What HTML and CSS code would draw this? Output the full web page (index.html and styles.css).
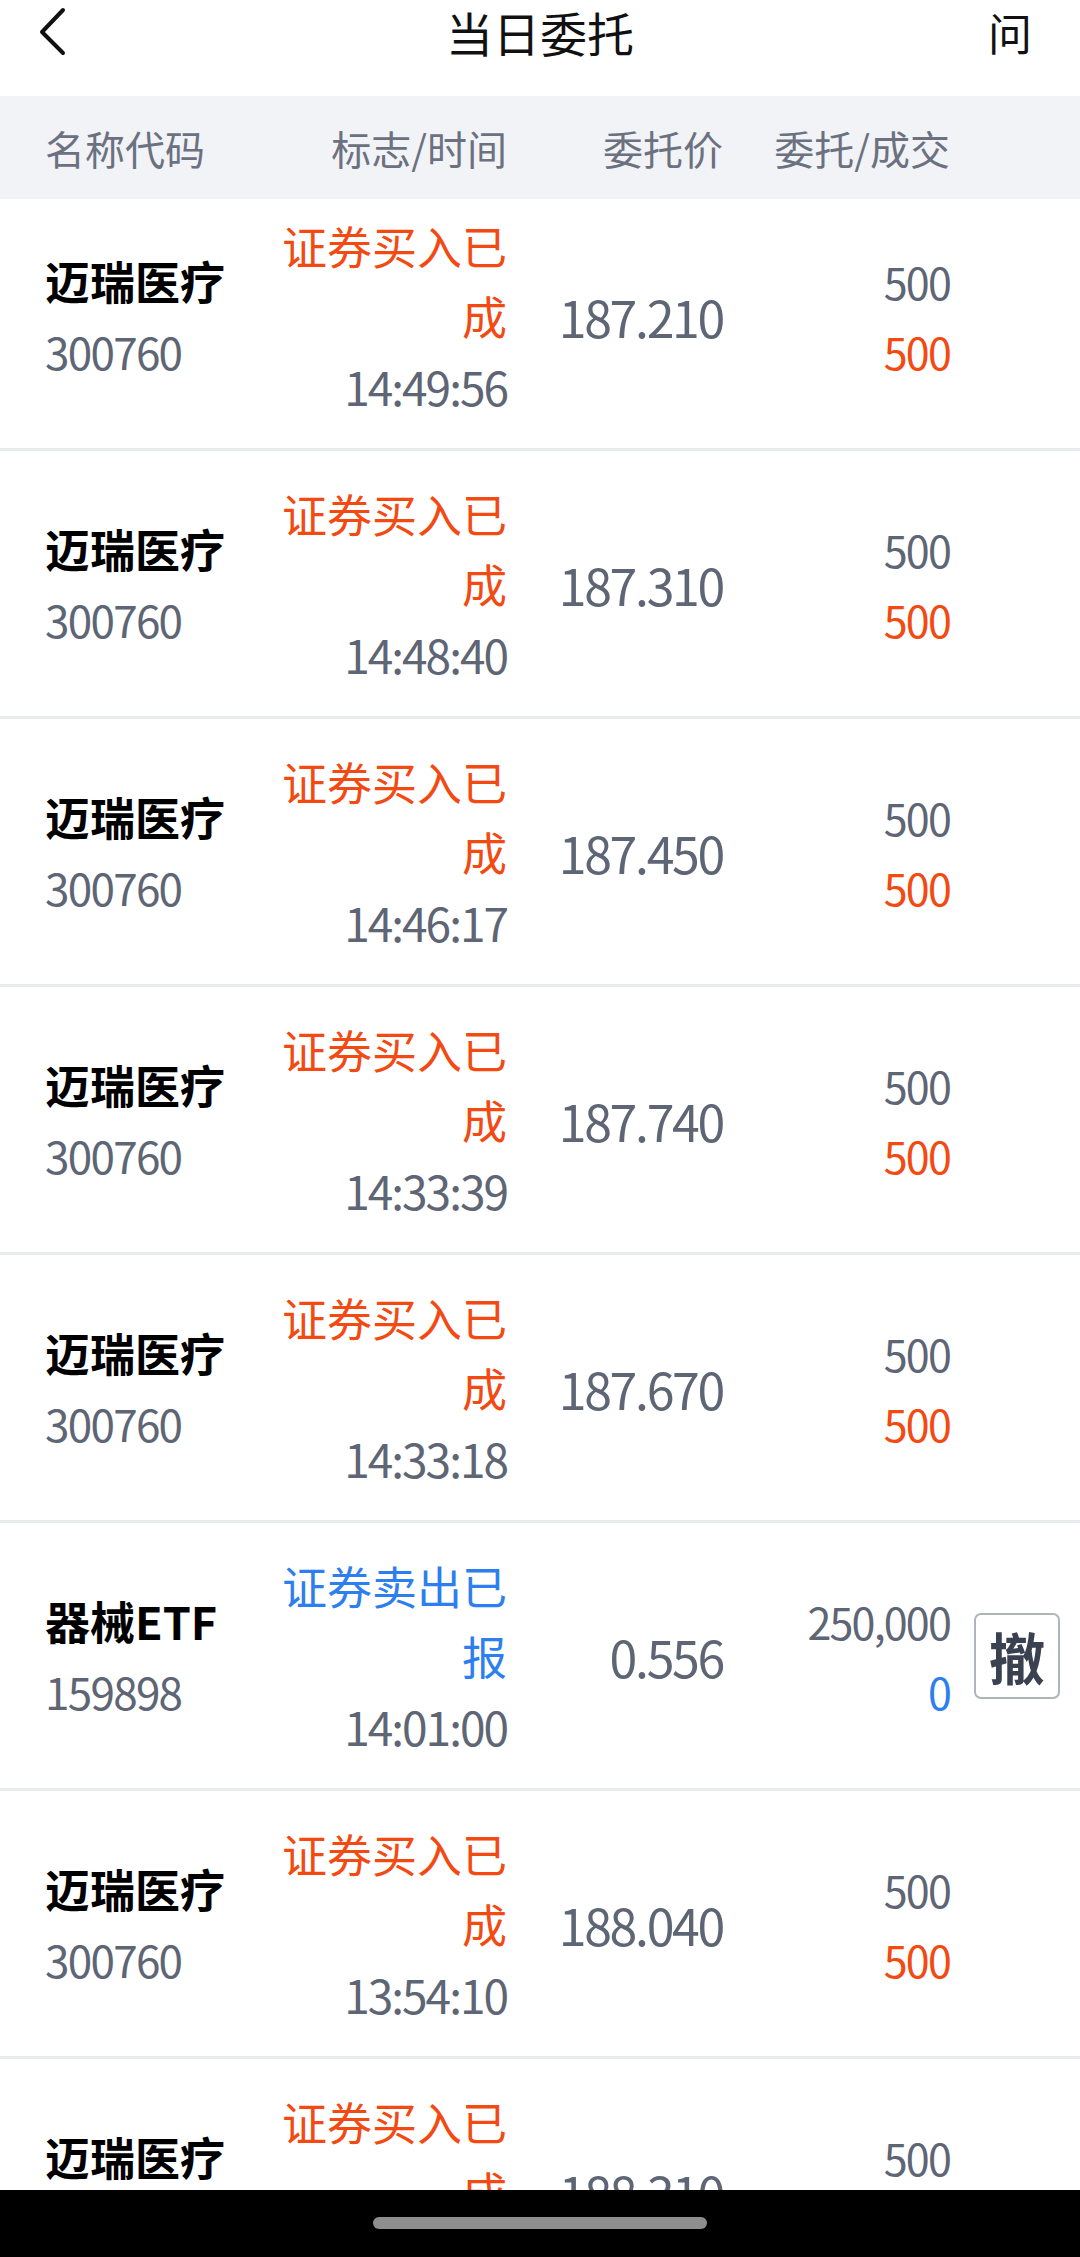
FILE: index.html
```html
<!DOCTYPE html>
<html lang="zh-CN">
<head>
  <meta charset="UTF-8">
  <title>当日委托</title>
  <link rel="stylesheet" href="styles.css">
</head>
<body>

  <div class="topbar">
    <div class="back">
      <svg width="44" height="64" viewBox="0 0 44 64">
        <path d="M33 10 L12 32 L33 53" fill="none" stroke="#111" stroke-width="4" stroke-linecap="round" stroke-linejoin="round"/>
      </svg>
    </div>
    <div class="title">当日委托</div>
    <div class="ask">问</div>
  </div>

  <div class="thead">
    <div>名称代码</div>
    <div class="r">标志/时间</div>
    <div class="r">委托价</div>
    <div class="r">委托/成交</div>
    <div></div>
  </div>

  <div class="list">
    <div class="rows">

      <div class="row">
        <div class="stock"><div class="name">迈瑞医疗</div><div class="code">300760</div></div>
        <div class="status"><div class="flag buy">证券买入已成</div><div class="time">14:49:56</div></div>
        <div class="price">187.210</div>
        <div class="qty"><div>500</div><div class="buy">500</div></div>
        <div class="action"></div>
      </div>

      <div class="row">
        <div class="stock"><div class="name">迈瑞医疗</div><div class="code">300760</div></div>
        <div class="status"><div class="flag buy">证券买入已成</div><div class="time">14:48:40</div></div>
        <div class="price">187.310</div>
        <div class="qty"><div>500</div><div class="buy">500</div></div>
        <div class="action"></div>
      </div>

      <div class="row">
        <div class="stock"><div class="name">迈瑞医疗</div><div class="code">300760</div></div>
        <div class="status"><div class="flag buy">证券买入已成</div><div class="time">14:46:17</div></div>
        <div class="price">187.450</div>
        <div class="qty"><div>500</div><div class="buy">500</div></div>
        <div class="action"></div>
      </div>

      <div class="row">
        <div class="stock"><div class="name">迈瑞医疗</div><div class="code">300760</div></div>
        <div class="status"><div class="flag buy">证券买入已成</div><div class="time">14:33:39</div></div>
        <div class="price">187.740</div>
        <div class="qty"><div>500</div><div class="buy">500</div></div>
        <div class="action"></div>
      </div>

      <div class="row">
        <div class="stock"><div class="name">迈瑞医疗</div><div class="code">300760</div></div>
        <div class="status"><div class="flag buy">证券买入已成</div><div class="time">14:33:18</div></div>
        <div class="price">187.670</div>
        <div class="qty"><div>500</div><div class="buy">500</div></div>
        <div class="action"></div>
      </div>

      <div class="row">
        <div class="stock"><div class="name">器械ETF</div><div class="code">159898</div></div>
        <div class="status"><div class="flag sell">证券卖出已报</div><div class="time">14:01:00</div></div>
        <div class="price">0.556</div>
        <div class="qty"><div>250,000</div><div class="sell">0</div></div>
        <div class="action"><button type="button" class="cancel">撤</button></div>
      </div>

      <div class="row">
        <div class="stock"><div class="name">迈瑞医疗</div><div class="code">300760</div></div>
        <div class="status"><div class="flag buy">证券买入已成</div><div class="time">13:54:10</div></div>
        <div class="price">188.040</div>
        <div class="qty"><div>500</div><div class="buy">500</div></div>
        <div class="action"></div>
      </div>

      <div class="row">
        <div class="stock"><div class="name">迈瑞医疗</div><div class="code">300760</div></div>
        <div class="status"><div class="flag buy">证券买入已成</div><div class="time">13:52:27</div></div>
        <div class="price">188.310</div>
        <div class="qty"><div>500</div><div class="buy">500</div></div>
        <div class="action"></div>
      </div>

    </div>
  </div>

  <div class="navbar">
    <div class="pill"></div>
  </div>

</body>
</html>
```

FILE: styles.css
```css
body {
  margin: 0;
  width: 1080px;
  height: 2257px;
  display: flex;
  flex-direction: column;
  overflow: hidden;
  background: #fff;
  font-family: "Noto Sans CJK SC", sans-serif;
  color: #000;
}

.topbar {
  flex: none;
  height: 64px;
  padding-bottom: 32px;
  display: grid;
  grid-template-columns: 200px 1fr 200px;
  align-items: center;
}

.back {
  padding-left: 30px;
  height: 64px;
}

.title {
  text-align: center;
  font-size: 47px;
  line-height: 64px;
  color: #111;
}

.ask {
  text-align: right;
  padding-right: 48px;
  font-size: 44px;
  line-height: 64px;
  color: #111;
}

.thead {
  flex: none;
  height: 103px;
  padding-left: 45px;
  background: #f2f3f6;
  display: grid;
  grid-template-columns: 222px 240px 216px 227px 110px;
  align-items: center;
  font-size: 40px;
  color: #6b7180;
}

.r {
  text-align: right;
}

.list {
  flex: 1;
  overflow: hidden;
}

/* liste défilée de quelques pixels sous l'en-tête */
.rows {
  margin-top: -16px;
}

.row {
  height: 265px;
  padding-left: 45px;
  border-bottom: 3px solid #e9ebef;
  display: grid;
  grid-template-columns: 222px 240px 216px 227px 110px;
  align-items: center;
}

.name {
  font-size: 45px;
  font-weight: 700;
  line-height: 70px;
}

.code {
  font-size: 44px;
  line-height: 70px;
  letter-spacing: -1.7px;
  color: #5e6574;
}

.status {
  text-align: right;
  font-size: 45px;
  line-height: 70px;
}

.time {
  font-size: 46px;
  letter-spacing: -2px;
  color: #5e6574;
}

.price {
  text-align: right;
  font-size: 50px;
  letter-spacing: -2.3px;
  color: #5e6574;
}

.qty {
  text-align: right;
  font-size: 43px;
  line-height: 70px;
  letter-spacing: -1.8px;
  color: #5e6574;
}

.buy {
  color: #f24a12;
}

.sell {
  color: #2d7ff0;
}

.action {
  justify-self: end;
}

.cancel {
  display: block;
  width: 86px;
  height: 86px;
  padding: 0;
  border: 2px solid #b0b4bb;
  border-radius: 7px;
  background: #fff;
  font-family: inherit;
  font-size: 56px;
  font-weight: 700;
  line-height: 80px;
  color: #3a4150;
}

.navbar {
  flex: none;
  height: 67px;
  background: #000;
  display: flex;
  justify-content: center;
}

.pill {
  margin-top: 27px;
  width: 334px;
  height: 12px;
  border-radius: 6px;
  background: #8e8e8e;
}
```
